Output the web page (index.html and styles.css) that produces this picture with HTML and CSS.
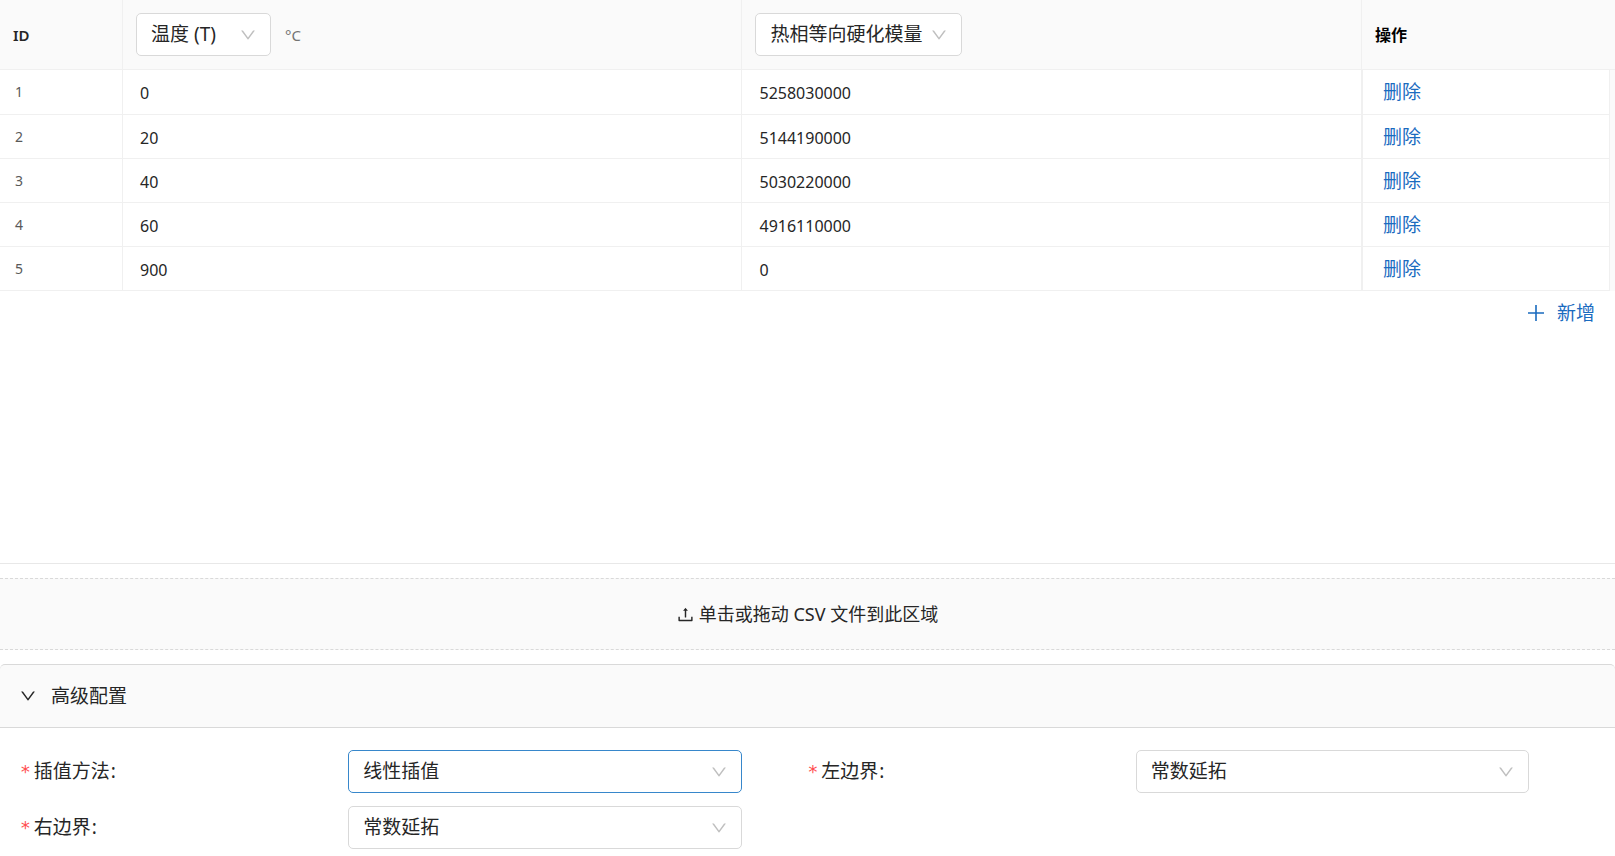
FILE: index.html
```html
<!DOCTYPE html>
<html lang="zh-CN">
<head>
<meta charset="utf-8">
<meta name="viewport" content="width=device-width, initial-scale=1">
<title>热相等向硬化模量</title>
<link rel="stylesheet" href="styles.css">
</head>
<body>
<svg class="sprite" aria-hidden="true">
  <symbol id="down" viewBox="64 64 896 896"><path d="M884 256h-75c-5.1 0-9.9 2.5-12.9 6.6L512 654.2 227.9 262.6c-3-4.1-7.8-6.6-12.9-6.6h-75c-6.5 0-10.3 7.4-6.5 12.7l352.6 486.1c12.8 17.6 39 17.6 51.7 0l352.6-486.1c3.9-5.3.1-12.7-6.4-12.7z"/></symbol>
  <symbol id="upload" viewBox="64 64 896 896"><path d="M400 317.7h73.9V656c0 4.4 3.6 8 8 8h60c4.4 0 8-3.6 8-8V317.7H624c6.7 0 10.4-7.7 6.3-12.9L518.3 163a8 8 0 0 0-12.6 0l-112 141.7c-4.1 5.3-.4 13 6.3 13zM878 626h-60c-4.4 0-8 3.6-8 8v154H214V634c0-4.4-3.6-8-8-8h-60c-4.4 0-8 3.6-8 8v198c0 17.7 14.3 32 32 32h684c17.7 0 32-14.3 32-32V634c0-4.4-3.6-8-8-8z"/></symbol>
  <symbol id="plus" viewBox="0 0 16 16"><path d="M7.2 0h1.6v7.2H16v1.6H8.800V16H7.200V8.800H0V7.200h7.200z"/></symbol>
</svg>

<main class="page">
  <section class="data">
    <table class="grid">
      <colgroup>
        <col class="col-id"><col><col><col class="col-action"><col class="col-gutter">
      </colgroup>
      <thead>
        <tr>
          <th class="id">ID</th>
          <th>
            <div class="head">
              <span class="select select-short">
                <select aria-label="自变量"><option>温度 (T)</option></select>
                <svg class="arrow"><use href="#down"/></svg>
              </span>
              <span class="unit">°C</span>
            </div>
          </th>
          <th>
            <div class="head">
              <span class="select select-long">
                <select aria-label="因变量"><option>热相等向硬化模量</option></select>
                <svg class="arrow"><use href="#down"/></svg>
              </span>
            </div>
          </th>
          <th colspan="2" class="action-head">操作</th>
        </tr>
      </thead>
      <tbody>
        <tr><td class="id">1</td><td>0</td><td>5258030000</td><td class="action"><button class="link" type="button">删除</button></td><td class="gutter"></td></tr>
        <tr><td class="id">2</td><td>20</td><td>5144190000</td><td class="action"><button class="link" type="button">删除</button></td><td class="gutter"></td></tr>
        <tr><td class="id">3</td><td>40</td><td>5030220000</td><td class="action"><button class="link" type="button">删除</button></td><td class="gutter"></td></tr>
        <tr><td class="id">4</td><td>60</td><td>4916110000</td><td class="action"><button class="link" type="button">删除</button></td><td class="gutter"></td></tr>
        <tr><td class="id">5</td><td>900</td><td>0</td><td class="action"><button class="link" type="button">删除</button></td><td class="gutter"></td></tr>
      </tbody>
    </table>
    <div class="toolbar">
      <button class="link add" type="button"><svg class="plus"><use href="#plus"/></svg>新增</button>
    </div>
  </section>

  <button class="dropzone" type="button"><svg class="upload"><use href="#upload"/></svg>单击或拖动 CSV 文件到此区域</button>

  <section class="advanced">
    <button class="advanced-head" type="button" aria-expanded="true"><svg class="arrow-dark"><use href="#down"/></svg>高级配置</button>
    <form class="fields">
      <div class="field">
        <label for="method"><span class="required">*</span>插值方法<span class="colon">:</span></label>
        <span class="select active">
          <select id="method"><option>线性插值</option></select>
          <svg class="arrow"><use href="#down"/></svg>
        </span>
      </div>
      <div class="field">
        <label for="left"><span class="required">*</span>左边界<span class="colon">:</span></label>
        <span class="select">
          <select id="left"><option>常数延拓</option></select>
          <svg class="arrow"><use href="#down"/></svg>
        </span>
      </div>
      <div class="field">
        <label for="right"><span class="required">*</span>右边界<span class="colon">:</span></label>
        <span class="select">
          <select id="right"><option>常数延拓</option></select>
          <svg class="arrow"><use href="#down"/></svg>
        </span>
      </div>
    </form>
  </section>
</main>
</body>
</html>
```
FILE: styles.css
```css
* {
  box-sizing: border-box;
}

body {
  margin: 0;
  background: #fff;
  color: #262626;
  font-family: "Noto Sans", "Noto Sans CJK SC", sans-serif;
  font-size: 19px;
  line-height: 28px;
}

button,
select {
  margin: 0;
  border: 0;
  background: none;
  color: inherit;
  font: inherit;
}

svg {
  fill: currentColor;
}

.sprite {
  display: none;
}

.page {
  display: flex;
  flex-direction: column;
  gap: 14px;
}

.data {
  min-height: 564px;
  border-bottom: 1px solid #e8e8e8;
}

/* Table */

.grid {
  width: 100%;
  border-collapse: separate;
  border-spacing: 0;
  table-layout: fixed;
}

.col-id {
  width: 123px;
}

.col-action {
  width: 248px;
}

.col-gutter {
  width: 5px;
}

.grid th {
  height: 70px;
  padding: 0 13px;
  border-right: 1px solid #f0f0f0;
  border-bottom: 1px solid #f0f0f0;
  background: #fafafa;
  font-size: 16px;
  font-weight: 600;
  text-align: left;
}

.grid th.action-head {
  border-right: 0;
  color: #000;
}

.grid td {
  height: 44px;
  padding: 2px 17px 0;
  border-right: 1px solid #f0f0f0;
  border-bottom: 1px solid #f0f0f0;
  font-size: 16px;
}

.grid tbody tr:first-child td {
  height: 45px;
}

.grid th.id {
  font-size: 15px;
}

.grid td.id {
  padding: 0 15px;
  color: #595959;
  font-size: 14px;
}

.grid td.action {
  padding: 0 20px;
  border-left: 1px solid #f0f0f0;
}

.grid td.gutter {
  padding: 0;
  border: 0;
  background: #fafafa;
}

.head {
  display: flex;
  align-items: center;
  gap: 14px;
}

.unit {
  color: #737373;
  font-size: 15px;
  font-weight: 400;
}

.link {
  padding: 0;
  color: #1a6bbf;
  font-size: 19px;
  cursor: pointer;
}

.grid .link {
  display: block;
}

.toolbar {
  display: flex;
  justify-content: flex-end;
  padding: 8px 20px;
}

.add {
  display: flex;
  align-items: center;
  gap: 13px;
}

.plus {
  width: 16px;
  height: 16px;
}

/* Select */

.select {
  display: grid;
  align-items: center;
  height: 43px;
  border: 1px solid #d9d9d9;
  border-radius: 5px;
  background: #fff;
  font-size: 19px;
  font-weight: 400;
}

.select select,
.select .arrow {
  grid-area: 1 / 1;
}

.select select {
  width: 100%;
  height: 100%;
  padding: 0 34px 1px 14px;
  border-radius: 5px;
  outline: none;
  appearance: none;
}

.select .arrow {
  justify-self: end;
  width: 16px;
  height: 16px;
  margin-right: 14px;
  color: #bfbfbf;
  pointer-events: none;
}

.select-short {
  width: 135px;
}

.select-long {
  width: 207px;
}

.active {
  border-color: #3787cb;
}

/* Upload area */

.dropzone {
  display: flex;
  align-items: center;
  justify-content: center;
  gap: 5px;
  height: 72px;
  border-top: 1px dashed #d9d9d9;
  border-bottom: 1px dashed #d9d9d9;
  background: #fafafa;
  font-size: 18px;
  cursor: pointer;
}

.upload {
  width: 17px;
  height: 17px;
}

/* Advanced settings */

.advanced-head {
  display: flex;
  align-items: center;
  gap: 15px;
  width: 100%;
  height: 64px;
  padding: 0 20px;
  border-top: 1px solid #d9d9d9;
  border-bottom: 1px solid #d9d9d9;
  border-radius: 5px 5px 0 0;
  background: #fafafa;
  cursor: pointer;
}

.arrow-dark {
  width: 16px;
  height: 16px;
}

.fields {
  display: grid;
  grid-template-columns: 1fr 1fr;
  row-gap: 13px;
  padding: 22px 20px 7px;
}

.field {
  display: grid;
  grid-template-columns: 5fr 6fr 1fr;
  align-items: center;
}

.required {
  margin-right: 3px;
  color: #ff4d4f;
  font-family: "DejaVu Sans Mono", monospace;
  font-size: 18px;
}

.colon {
  margin-left: 1px;
}
```
